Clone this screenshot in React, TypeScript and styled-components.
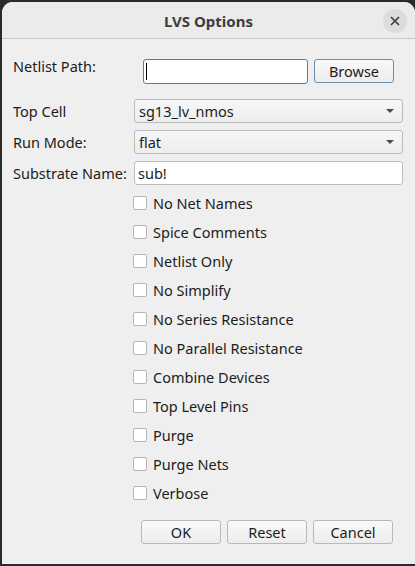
import React from "react";
import styled, { createGlobalStyle } from "styled-components";

const Global = createGlobalStyle`
  html, body { margin: 0; padding: 0; background: #2b2b2b; }
  body { width: 415px; height: 566px; overflow: hidden; }
  * { box-sizing: border-box; }
`;

const FONT = `"Noto Sans", "Open Sans", sans-serif`;

const Desktop = styled.div`
  width: 415px;
  height: 566px;
  padding: 2px 0 2px 2px;
  background: #2a2a2a;
  display: flex;
`;

const Window = styled.div`
  flex: 1;
  display: flex;
  flex-direction: column;
  background: #efefef;
  border-radius: 11px 11px 0 0;
  overflow: hidden;
  font-family: ${FONT};
  font-size: 14.5px;
  color: #1c1c1c;
`;

const TitleBar = styled.div`
  height: 37px;
  flex: none;
  display: flex;
  align-items: center;
  justify-content: center;
  background: #ebebeb;
  border-bottom: 1px solid #c9c9c9;
  position: relative;
`;

const Title = styled.div`
  font-weight: 700;
  font-size: 15px;
  color: #3d3d3d;
  margin-top: 1px;
`;

const CloseBtn = styled.div`
  position: absolute;
  right: 8px;
  top: 7px;
  width: 24px;
  height: 24px;
  border-radius: 50%;
  background: #dcdcdc;
  display: flex;
  align-items: center;
  justify-content: center;
`;

const Body = styled.div`
  flex: 1;
  display: flex;
  flex-direction: column;
  padding: 20px 12px 0 11px;
`;

const NetRow = styled.div`
  display: flex;
  align-items: flex-start;
  height: 24px;
`;

const NetLabel = styled.div`
  width: 130px;
  line-height: 18px;
  margin-top: -2px;
`;

const TextInput = styled.div<{ $focused?: boolean }>`
  height: ${(p) => (p.$focused ? 25 : 24)}px;
  flex: ${(p) => (p.$focused ? "none" : 1)};
  width: ${(p) => (p.$focused ? "165px" : "auto")};
  background: #fff;
  border: 1px solid ${(p) => (p.$focused ? "#3b84c4" : "#bdbdbd")};
  border-radius: 3px;
  display: flex;
  align-items: center;
  padding-left: 3px;
  line-height: 18px;
`;

const Caret = styled.div`
  width: 1px;
  height: 17px;
  background: #000;
  margin-left: -1px;
`;

const PushButton = styled.div<{ $accent?: boolean }>`
  width: 80px;
  height: 24px;
  flex: none;
  border: 1px solid ${(p) => (p.$accent ? "#6b8fae" : "#b8b8b8")};
  border-radius: 3px;
  background: linear-gradient(#f9f9f9, #ececec);
  display: flex;
  align-items: center;
  justify-content: center;
  line-height: 18px;
`;

const Form = styled.div`
  display: grid;
  grid-template-columns: 121px 1fr;
  row-gap: 7px;
  margin-top: 16px;
  align-items: center;
`;

const Label = styled.div`
  line-height: 18px;
`;

const Combo = styled.div`
  height: 24px;
  border: 1px solid #bbbbbb;
  border-radius: 3px;
  background: linear-gradient(#f7f7f7, #ededed);
  display: flex;
  align-items: center;
  justify-content: space-between;
  padding: 0 8px 0 4px;
  line-height: 18px;
`;

const Arrow = styled.div`
  width: 0;
  height: 0;
  border-left: 4px solid transparent;
  border-right: 4px solid transparent;
  border-top: 4px solid #4a4a4a;
`;

const Checks = styled.div`
  display: flex;
  flex-direction: column;
  margin-top: 3px;
  padding-left: 120px;
`;

const CheckRow = styled.label`
  height: 29px;
  display: flex;
  align-items: center;
  gap: 6px;
  line-height: 18px;
`;

const Box = styled.span`
  width: 14px;
  height: 14px;
  background: #fff;
  border: 1px solid #b5b5b5;
  border-radius: 2px;
  flex: none;
`;

const Buttons = styled.div`
  display: flex;
  justify-content: flex-end;
  gap: 6px;
  margin-top: 13px;
  padding-right: 10px;
`;

const checks = [
  "No Net Names",
  "Spice Comments",
  "Netlist Only",
  "No Simplify",
  "No Series Resistance",
  "No Parallel Resistance",
  "Combine Devices",
  "Top Level Pins",
  "Purge",
  "Purge Nets",
  "Verbose",
];

export default function App() {
  return (
    <>
      <Global />
      <Desktop>
        <Window>
          <TitleBar>
            <Title>LVS Options</Title>
            <CloseBtn>
              <svg width="10" height="10" viewBox="0 0 10 10">
                <path d="M1 1 L9 9 M9 1 L1 9" stroke="#3a3a3a" strokeWidth="1.6" />
              </svg>
            </CloseBtn>
          </TitleBar>
          <Body>
            <NetRow>
              <NetLabel>Netlist Path:</NetLabel>
              <TextInput $focused>
                <Caret />
              </TextInput>
              <PushButton $accent style={{ marginLeft: 6 }}>Browse</PushButton>
            </NetRow>
            <Form>
              <Label>Top Cell</Label>
              <Combo>
                <span>sg13_lv_nmos</span>
                <Arrow />
              </Combo>
              <Label>Run Mode:</Label>
              <Combo>
                <span>flat</span>
                <Arrow />
              </Combo>
              <Label>Substrate Name:</Label>
              <TextInput>sub!</TextInput>
            </Form>
            <Checks>
              {checks.map((c) => (
                <CheckRow key={c}>
                  <Box />
                  <span>{c}</span>
                </CheckRow>
              ))}
            </Checks>
            <Buttons>
              <PushButton>OK</PushButton>
              <PushButton>Reset</PushButton>
              <PushButton>Cancel</PushButton>
            </Buttons>
          </Body>
        </Window>
      </Desktop>
    </>
  );
}
